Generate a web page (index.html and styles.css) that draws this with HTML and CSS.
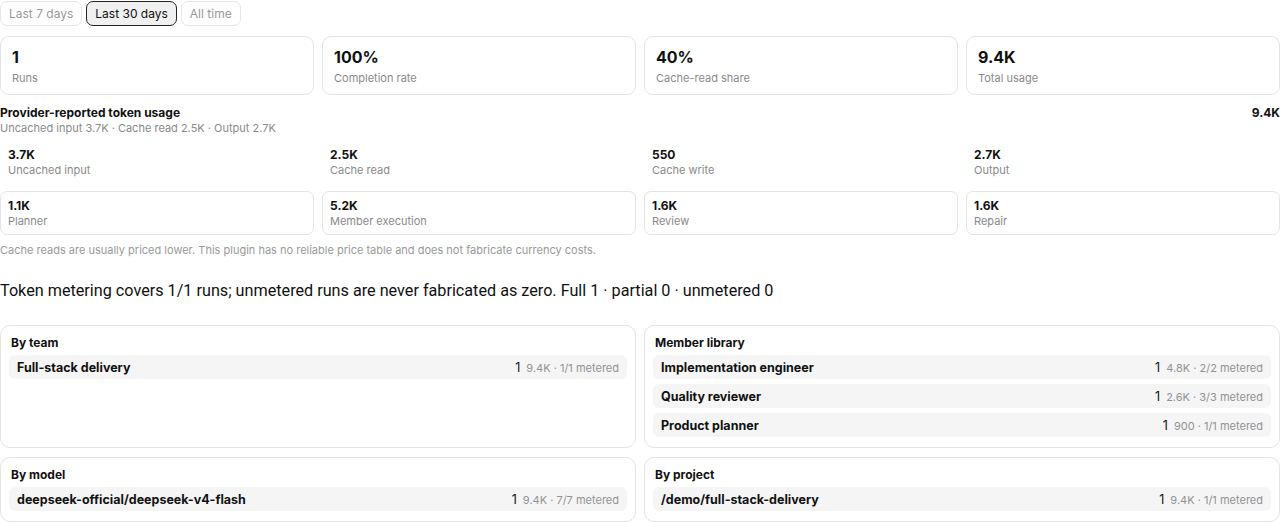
FILE: index.html
```html
<!DOCTYPE html>
<html>
<head>
<meta charset="utf-8">
<link rel="stylesheet" href="styles.css">
</head>
<body>
<div class="page">
  <div class="tabs">
    <button class="tab">Last 7 days</button>
    <button class="tab active">Last 30 days</button>
    <button class="tab">All time</button>
  </div>

  <div class="grid4 stats">
    <div class="stat"><div class="big">1</div><div class="lbl">Runs</div></div>
    <div class="stat"><div class="big">100%</div><div class="lbl">Completion rate</div></div>
    <div class="stat"><div class="big">40%</div><div class="lbl">Cache-read share</div></div>
    <div class="stat"><div class="big">9.4K</div><div class="lbl">Total usage</div></div>
  </div>

  <div class="usage-head">
    <div>
      <div class="h">Provider-reported token usage</div>
      <div class="sub">Uncached input 3.7K · Cache read 2.5K · Output 2.7K</div>
    </div>
    <div class="h">9.4K</div>
  </div>

  <div class="grid4 tokens first">
    <div class="tok plain"><div class="v">3.7K</div><div class="lbl">Uncached input</div></div>
    <div class="tok plain"><div class="v">2.5K</div><div class="lbl">Cache read</div></div>
    <div class="tok plain"><div class="v">550</div><div class="lbl">Cache write</div></div>
    <div class="tok plain"><div class="v">2.7K</div><div class="lbl">Output</div></div>
  </div>
  <div class="grid4 tokens">
    <div class="tok"><div class="v">1.1K</div><div class="lbl">Planner</div></div>
    <div class="tok"><div class="v">5.2K</div><div class="lbl">Member execution</div></div>
    <div class="tok"><div class="v">1.6K</div><div class="lbl">Review</div></div>
    <div class="tok"><div class="v">1.6K</div><div class="lbl">Repair</div></div>
  </div>

  <div class="note">Cache reads are usually priced lower. This plugin has no reliable price table and does not fabricate currency costs.</div>

  <div class="meter">Token metering covers 1/1 runs; unmetered runs are never fabricated as zero. Full 1 · partial 0 · unmetered 0</div>

  <div class="grid2">
    <div class="panel">
      <div class="ptitle">By team</div>
      <div class="row"><span class="name">Full-stack delivery</span><span class="meta"><b>1</b> 9.4K · 1/1 metered</span></div>
    </div>
    <div class="panel">
      <div class="ptitle">Member library</div>
      <div class="row"><span class="name">Implementation engineer</span><span class="meta"><b>1</b> 4.8K · 2/2 metered</span></div>
      <div class="row"><span class="name">Quality reviewer</span><span class="meta"><b>1</b> 2.6K · 3/3 metered</span></div>
      <div class="row"><span class="name">Product planner</span><span class="meta"><b>1</b> 900 · 1/1 metered</span></div>
    </div>
    <div class="panel">
      <div class="ptitle">By model</div>
      <div class="row"><span class="name">deepseek-official/deepseek-v4-flash</span><span class="meta"><b>1</b> 9.4K · 7/7 metered</span></div>
    </div>
    <div class="panel">
      <div class="ptitle">By project</div>
      <div class="row"><span class="name">/demo/full-stack-delivery</span><span class="meta"><b>1</b> 9.4K · 1/1 metered</span></div>
    </div>
  </div>
</div>
</body>
</html>
```

FILE: styles.css
```css
* { box-sizing: border-box; }
html, body { margin: 0; padding: 0; background: #fff; }
body {
  font-family: Inter, "Noto Sans", sans-serif;
  color: #111;
}
.page { width: 1280px; padding-top: 1px; }

.tabs { display: flex; gap: 4px; }
.tab {
  font-family: inherit;
  font-size: 12px;
  line-height: 15px;
  padding: 4px 8px;
  border: 1px solid #e6e6e6;
  border-radius: 7px;
  background: #fff;
  color: #999;
  margin: 0;
}
.tab.active {
  background: #f0f0f0;
  border-color: #222;
  color: #111;
}

.grid4 { display: grid; grid-template-columns: repeat(4, 1fr); gap: 8px; }
.stats { margin-top: 10px; }
.stat {
  border: 1px solid #e4e4e4;
  border-radius: 9px;
  padding: 10px 11px 9px;
}
.big { font-size: 16px; line-height: 20px; font-weight: 700; }
.lbl { font-size: 11px; line-height: 14px; color: #8a8a8a; }
.stat .lbl { margin-top: 4px; }

.usage-head {
  display: flex;
  justify-content: space-between;
  margin-top: 10px;
}
.h { font-size: 12px; line-height: 16px; font-weight: 700; }
.sub { font-size: 11px; line-height: 14px; color: #8a8a8a; }

.tokens { margin-top: 7px; }
.tokens.first { margin-top: 5px; }
.tok {
  border: 1px solid #e4e4e4;
  border-radius: 7px;
  padding: 6px 7px;
}
.tok.plain { border-color: transparent; }
.v { font-size: 12px; line-height: 16px; font-weight: 700; }

.note {
  margin-top: 8px;
  font-size: 11px;
  line-height: 14px;
  color: #9a9a9a;
}
.meter {
  margin-top: 24px;
  font-family: Roboto, Inter, sans-serif;
  font-size: 16.2px;
  line-height: 20px;
  color: #111;
}

.grid2 {
  margin-top: 24px;
  display: grid;
  grid-template-columns: 1fr 1fr;
  gap: 9px 8px;
}
.panel {
  border: 1px solid #e4e4e4;
  border-radius: 10px;
  padding: 9px 8px 10px;
  display: flex;
  flex-direction: column;
  gap: 5px;
}
.ptitle {
  font-size: 12px;
  line-height: 16px;
  font-weight: 700;
  padding-left: 2px;
  margin-bottom: -1px;
}
.row {
  background: #f5f5f6;
  border-radius: 6px;
  height: 24px;
  padding: 0 8px;
  display: flex;
  align-items: center;
  justify-content: space-between;
}
.name { font-size: 12.5px; font-weight: 700; }
.meta { font-size: 11px; color: #929292; }
.meta b { font-size: 12.5px; font-weight: 400; color: #111; margin-right: 3px; }
```
